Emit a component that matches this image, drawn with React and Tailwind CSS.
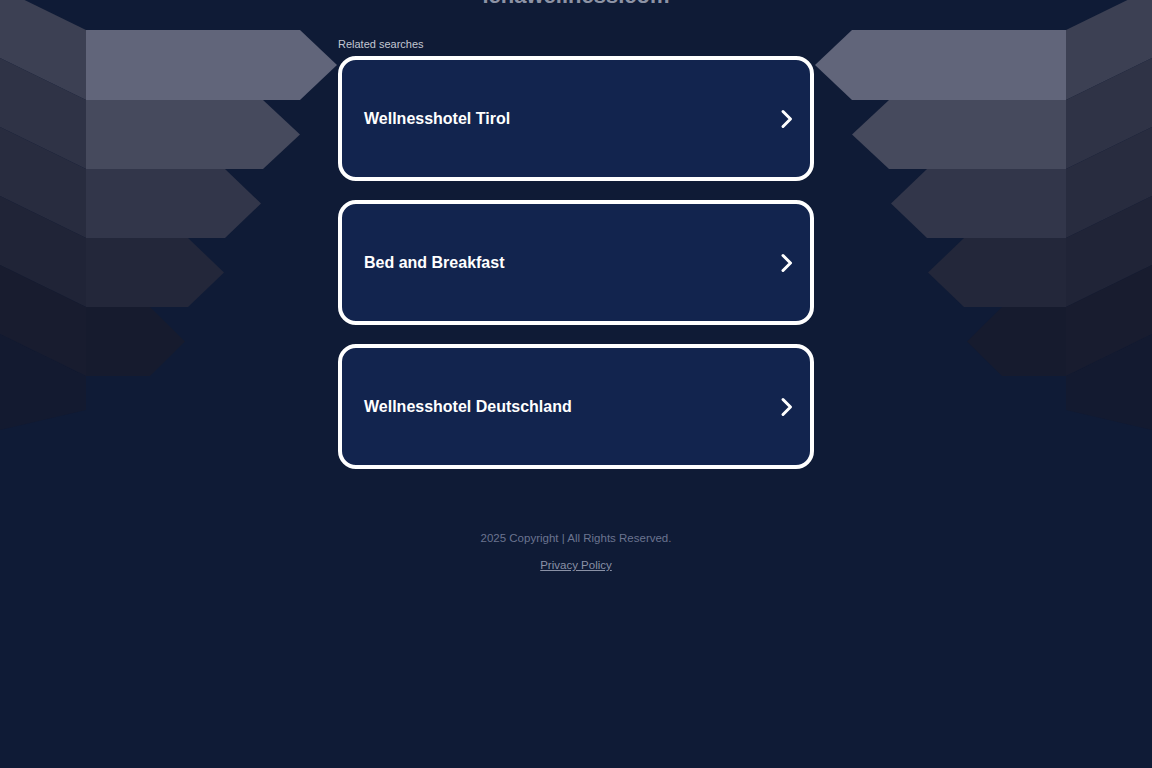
const rows = [
  { yt: 30, yb: 100, rx: 300, tx: 337, front: "#61657a", side: "#3c4053" },
  { yt: 100, yb: 169, rx: 263, tx: 300, front: "#464a5d", side: "#2f3346" },
  { yt: 169, yb: 238, rx: 225, tx: 261, front: "#32364a", side: "#282c3f" },
  { yt: 238, yb: 307, rx: 188, tx: 224, front: "#23273a", side: "#202437" },
  { yt: 307, yb: 376, rx: 150, tx: 185, front: "#161b2e", side: "#181c2f" },
];

const searches = ["Wellnesshotel Tirol", "Bed and Breakfast", "Wellnesshotel Deutschland"];

const Steps = ({ className }) => (
  <svg className={className} width="340" height="430" viewBox="0 0 340 430">
    <polygon points="0,334 86,376 86,410 0,430" fill="#131a30" />
    {rows.map((r, i) => (
      <g key={i}>
        <polygon points={`0,${r.yt - 42} 86,${r.yt} 86,${r.yb} 0,${r.yb - 42}`} fill={r.side} />
        <polygon
          points={`86,${r.yt} ${r.rx},${r.yt} ${r.tx},${(r.yt + r.yb) / 2} ${r.rx},${r.yb} 86,${r.yb}`}
          fill={r.front}
        />
      </g>
    ))}
  </svg>
);

const Chevron = () => (
  <svg width="14" height="20" viewBox="0 0 14 20" fill="none">
    <path d="M3 2.5 L10.5 10 L3 17.5" stroke="white" strokeWidth="3" strokeLinecap="round" strokeLinejoin="round" />
  </svg>
);

export default function App() {
  return (
    <div className="relative min-h-screen overflow-hidden bg-[#0f1b36] font-['Liberation_Sans',Arial,sans-serif]">
      <Steps className="absolute left-0 top-0" />
      <Steps className="absolute right-0 top-0 -scale-x-100" />

      <div className="relative mx-auto w-[476px]">
        <h1 className="-mt-[18px] text-center text-[22px] font-bold leading-[28px] text-[#8d93a5]">lenawellness.com</h1>
        <p className="mt-[27px] text-[11px] leading-[14px] text-[#c3c7d2]">Related searches</p>

        <div className="mt-[5px] flex flex-col gap-[19px]">
          {searches.map((s) => (
            <a
              key={s}
              href="#"
              className="flex h-[125px] items-center justify-between rounded-[18px] border-4 border-white bg-[#12244e] pl-[22px] pr-[16px]"
            >
              <span className="text-[16px] font-bold text-white">{s}</span>
              <Chevron />
            </a>
          ))}
        </div>

        <div className="mt-[62px] flex flex-col items-center gap-[13px] text-[11.5px] leading-[14px]">
          <p className="text-[#6b7490]">2025 Copyright | All Rights Reserved.</p>
          <a href="#" className="text-[#8a91a6] underline">Privacy Policy</a>
        </div>
      </div>
    </div>
  );
}
